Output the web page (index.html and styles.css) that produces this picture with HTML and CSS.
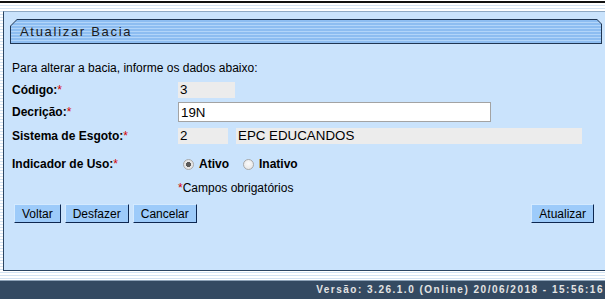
FILE: index.html
```html
<!DOCTYPE html>
<html lang="pt-BR">
<head>
<meta charset="utf-8">
<title>Atualizar Bacia</title>
<link rel="stylesheet" href="styles.css">
</head>
<body>
<div class="topline"></div>
<div class="panel">
  <div class="title"><div class="title-inner">Atualizar Bacia</div></div>
  <div class="content">
    <p class="intro">Para alterar a bacia, informe os dados abaixo:</p>
    <div class="row r-codigo">
      <span class="label">Código:<span class="req">*</span></span>
      <div class="field"><span class="ro w-cod">3</span></div>
    </div>
    <div class="row r-desc">
      <span class="label">Decrição:<span class="req">*</span></span>
      <div class="field"><input class="txt" type="text" value="19N"></div>
    </div>
    <div class="row r-sist">
      <span class="label">Sistema de Esgoto:<span class="req">*</span></span>
      <div class="field"><span class="ro w-sis">2</span><span class="ro w-epc">EPC EDUCANDOS</span></div>
    </div>
    <div class="row r-ind">
      <span class="label">Indicador de Uso:<span class="req">*</span></span>
      <div class="field radios">
        <label class="opt"><input type="radio" name="uso" checked><span>Ativo</span></label>
        <label class="opt"><input type="radio" name="uso"><span>Inativo</span></label>
      </div>
    </div>
    <div class="row r-obr">
      <span></span>
      <span class="obr"><span class="req">*</span>Campos obrigatórios</span>
    </div>
    <div class="buttons">
      <div class="btn-group">
        <button class="btn" type="button">Voltar</button>
        <button class="btn" type="button">Desfazer</button>
        <button class="btn" type="button">Cancelar</button>
      </div>
      <button class="btn" type="button">Atualizar</button>
    </div>
  </div>
</div>
<div class="version">Versão: 3.26.1.0 (Online) 20/06/2018 - 15:56:16</div>
</body>
</html>
```

FILE: styles.css
```css
html, body {
  margin: 0;
  padding: 0;
}
body {
  height: 299px;
  overflow: hidden;
  background: repeating-linear-gradient(to bottom, #ffffff 0 2px, #d3e3f3 2px 3px);
  font-family: "Liberation Sans", Arial, sans-serif;
  font-size: 12px;
  color: #000;
}
.topline {
  height: 2px;
  margin-top: 1px;
  background: #111;
}
.panel {
  box-sizing: border-box;
  height: 260px;
  margin: 8px 0 0 3px;
  background: #cae3fc;
  border-top: 1px solid #8fa9c4;
  border-left: 1px solid #2b4461;
  border-bottom: 1px solid #2b4461;
}
.title {
  box-sizing: border-box;
  height: 25px;
  margin: 7px 3px 0 6px;
  padding: 1px;
  background: #1f3552;
  clip-path: polygon(7px 0, calc(100% - 5px) 0, 100% 5px, 100% 100%, 0 100%, 0 7px);
}
.title-inner {
  height: 100%;
  padding-left: 9px;
  line-height: 23px;
  font-size: 13px;
  letter-spacing: 1.7px;
  color: #1b1b1b;
  background: repeating-linear-gradient(to bottom, #8dbdf1 0 2px, #b2d5f9 2px 3px);
  clip-path: polygon(6px 0, calc(100% - 4px) 0, 100% 4px, 100% 100%, 0 100%, 0 6px);
}
.content {
  padding-left: 8px;
}
.intro {
  margin: 16px 0 0;
  line-height: 16px;
}
.row {
  display: grid;
  grid-template-columns: 166px auto;
  align-items: center;
}
.label {
  font-weight: bold;
}
.req {
  color: #d40000;
  font-weight: normal;
}
.r-codigo { margin-top: 4px; height: 20px; }
.r-desc { height: 24px; }
.r-sist { height: 24px; }
.r-ind { margin-top: 4px; height: 24px; }
.r-obr { margin-top: 4px; height: 16px; line-height: 16px; }
.field {
  display: flex;
  align-items: center;
}
.ro {
  box-sizing: border-box;
  display: block;
  height: 16px;
  padding-left: 2px;
  line-height: 16px;
  font-size: 13.333px;
  background: #ececec;
}
.w-cod { width: 57px; }
.w-sis { width: 50px; }
.w-epc { width: 346px; margin-left: 8px; }
.txt {
  box-sizing: border-box;
  width: 313px;
  height: 20px;
  margin: 0;
  padding: 1px 2px;
  border: 1px solid #a3a3a3;
  background: #fff;
  font-family: "Liberation Sans", Arial, sans-serif;
  font-size: 13.333px;
  color: #000;
  outline: none;
}
.radios {
  padding-left: 5px;
  gap: 14px;
}
.opt {
  display: flex;
  align-items: center;
  gap: 5px;
  font-weight: bold;
}
.opt input {
  appearance: none;
  -webkit-appearance: none;
  box-sizing: border-box;
  width: 11px;
  height: 11px;
  margin: 1px 0 0;
  border: 1px solid #a9a9a9;
  border-radius: 50%;
  background: radial-gradient(circle at 50% 40%, #fafafa 0, #e3e3e3 100%);
}
.opt input:checked {
  background: radial-gradient(circle, #5a5a5a 0 2.3px, #e6e6e6 2.8px);
}
.buttons {
  display: flex;
  justify-content: space-between;
  margin: 8px 11px 0 2px;
}
.btn-group {
  display: flex;
  gap: 4px;
}
.btn {
  box-sizing: border-box;
  height: 19px;
  margin: 0;
  padding: 0 7px;
  font-family: "Liberation Sans", Arial, sans-serif;
  font-size: 12px;
  line-height: 16px;
  color: #000;
  background: #9dcbfa;
  border: 1px solid;
  border-color: #d4eaff #0d2750 #0d2750 #d4eaff;
}
.version {
  box-sizing: border-box;
  height: 20px;
  margin-top: 9px;
  padding-right: 1px;
  background: #344a62;
  border-top: 1px solid #8ea3b8;
  text-align: right;
  line-height: 18px;
  font-size: 10px;
  font-weight: bold;
  letter-spacing: 1.5px;
  color: #e4e4e4;
  white-space: nowrap;
}
```
